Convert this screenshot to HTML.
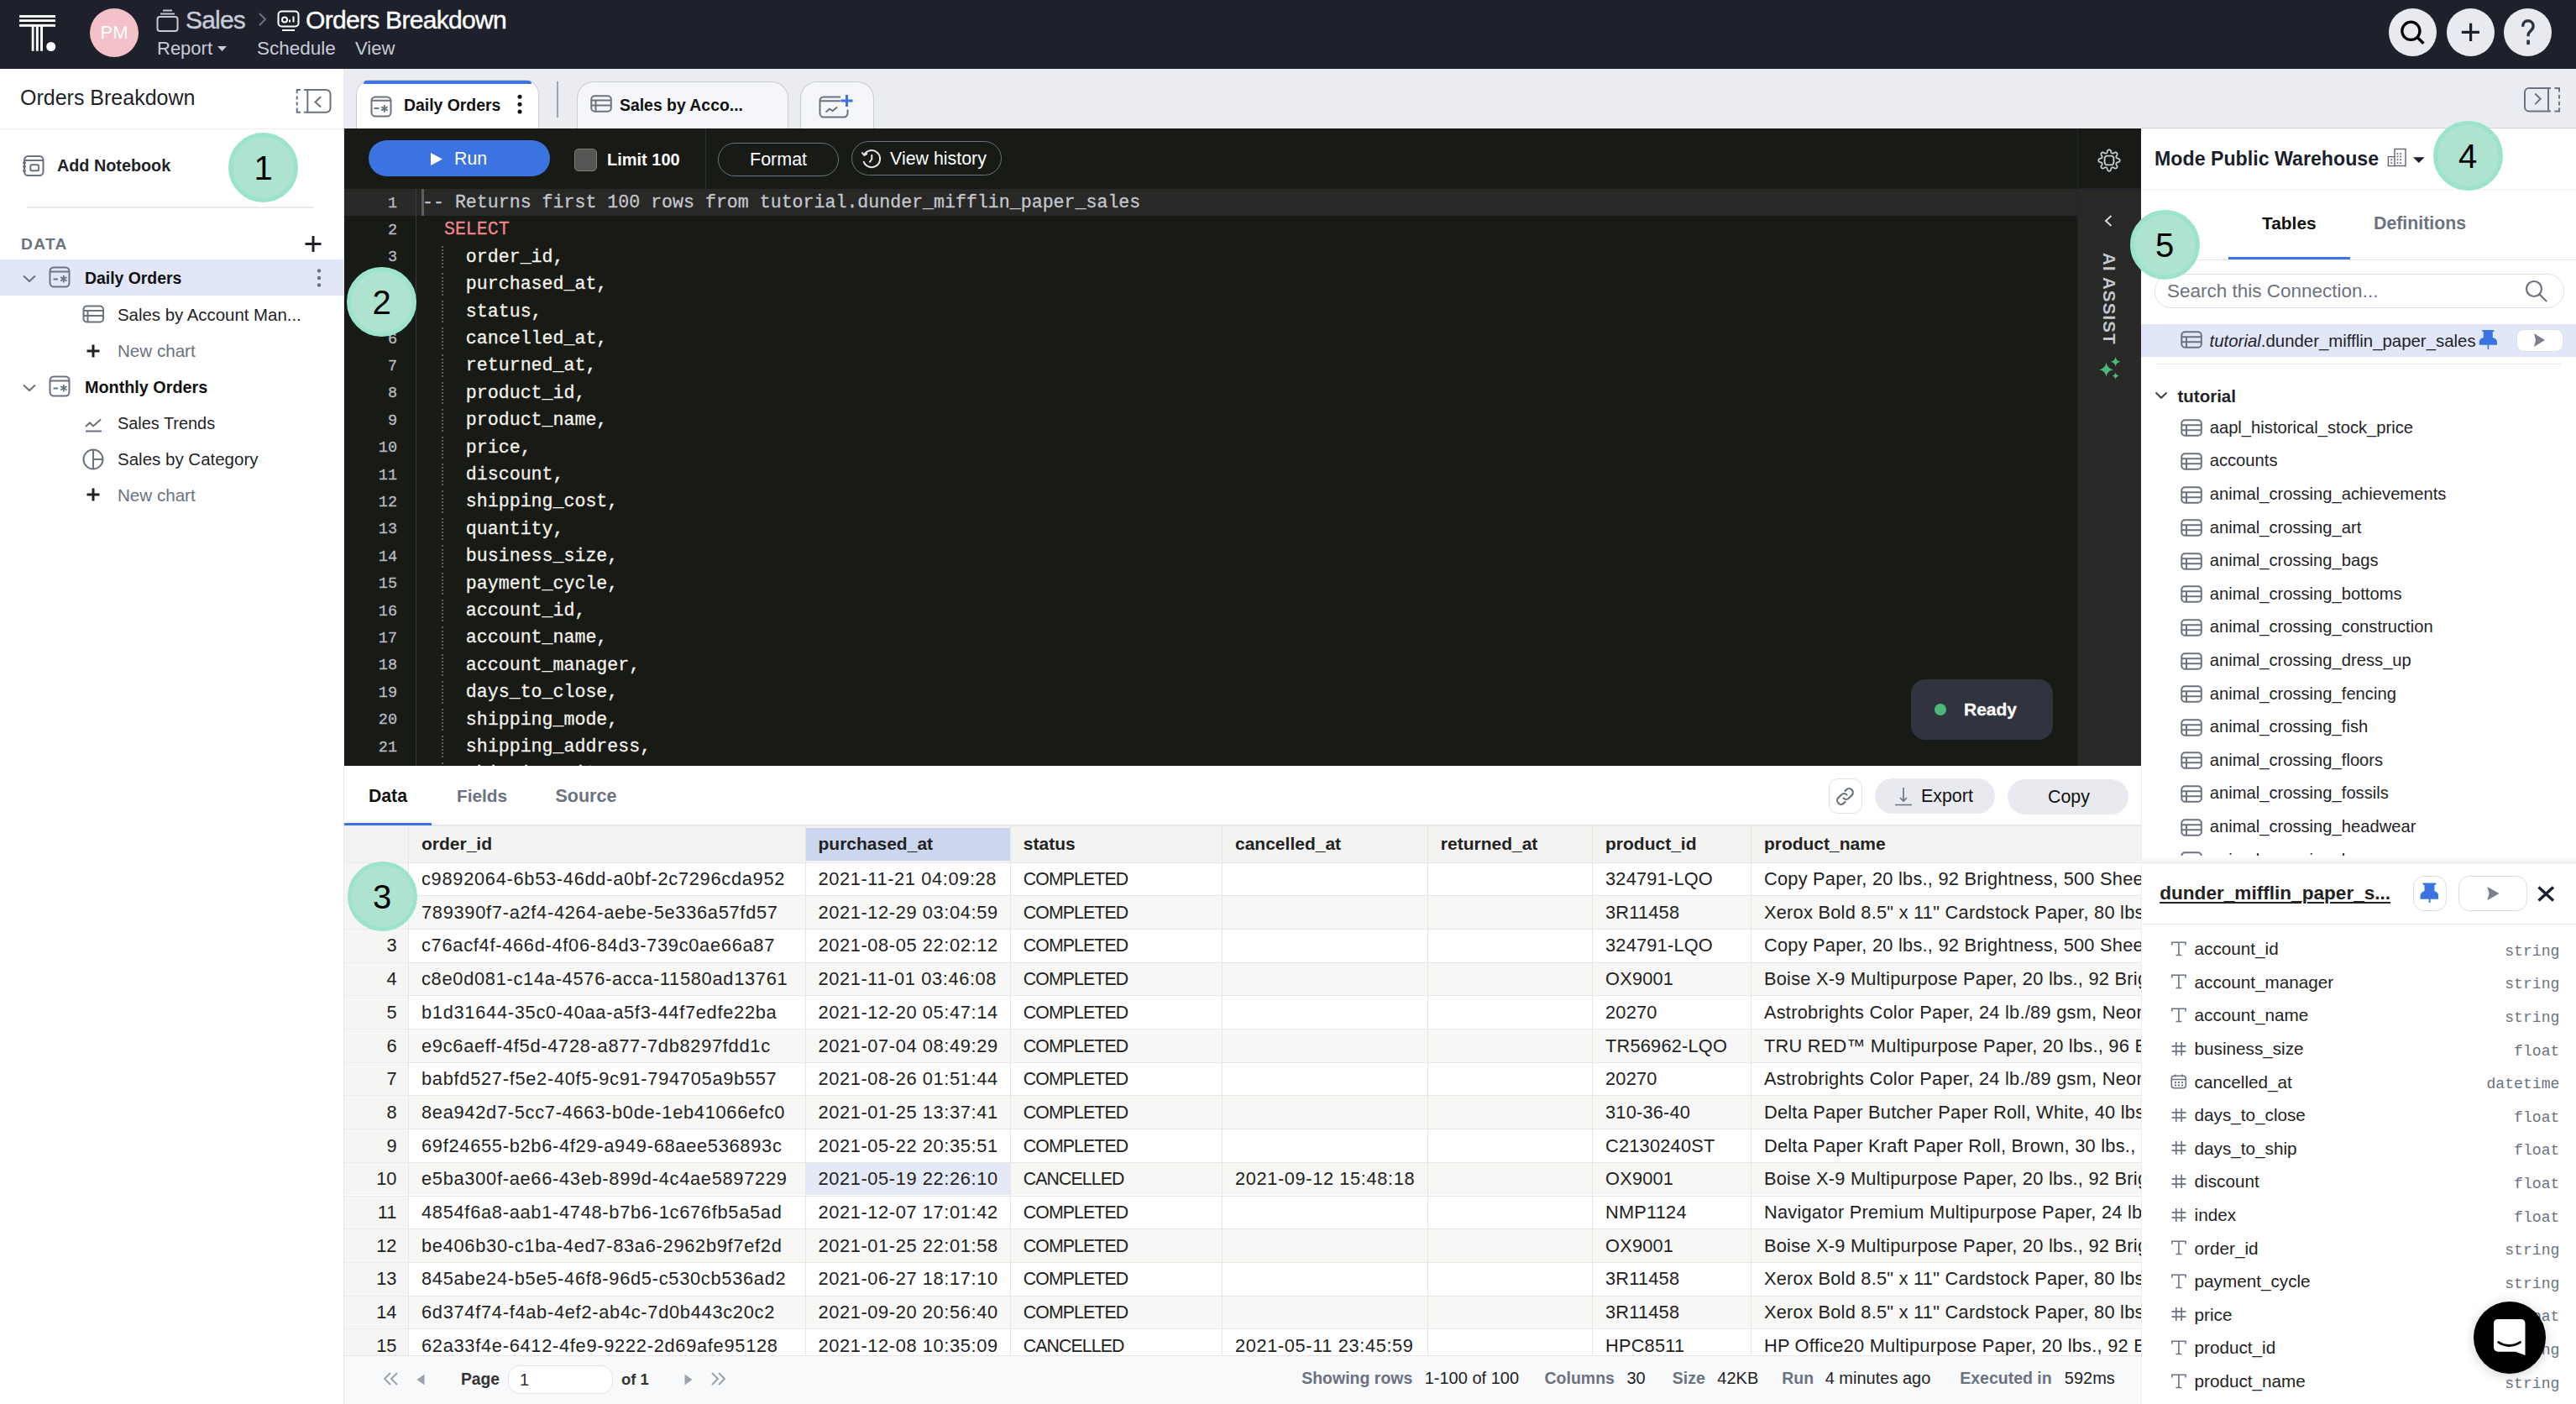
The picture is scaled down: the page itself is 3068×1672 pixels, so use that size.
<!DOCTYPE html>
<html><head><meta charset="utf-8"><style>
*{box-sizing:border-box;margin:0;padding:0}
html,body{width:3068px;height:1672px;overflow:hidden;background:#fff}
body{font-family:"Liberation Sans",sans-serif;color:#1f2328;position:relative}
.a{position:absolute}
.mono{font-family:"Liberation Mono",monospace}
.nw{white-space:nowrap}
svg{display:block;overflow:visible}
/* header */
#hdr{left:0;top:0;width:3068px;height:82px;background:#1e212b}
/* annotation circles */
.ann{position:absolute;width:83px;height:83px;border-radius:50%;background:#ade3cf;border:5.5px solid #9be3cb;color:#000;font-size:40px;text-align:center;line-height:75px}
</style></head><body>
<div id="hdr" class="a">
  <svg class="a" style="left:0;top:0" width="90" height="82">
    <g fill="#fff">
      <rect x="23" y="18" width="43" height="2.9"/>
      <rect x="23" y="23.2" width="43" height="2.8"/>
      <rect x="23" y="28.9" width="43" height="2.9"/>
      <rect x="37.7" y="31" width="2.8" height="29.8"/>
      <rect x="42.9" y="31" width="2.9" height="29.8"/>
      <rect x="48.1" y="31" width="2.9" height="29.8"/>
      <circle cx="60.7" cy="55.5" r="5.5"/>
    </g>
  </svg>
  <div class="a" style="left:107px;top:10px;width:58px;height:58px;border-radius:50%;background:#f4c1c8;color:#fff;font-size:22px;text-align:center;line-height:58px">PM</div>
  <svg class="a" style="left:186px;top:10px" width="28" height="28" viewBox="0 0 28 28">
    <g fill="none" stroke="#c4c8d2" stroke-width="2">
      <rect x="1.5" y="10" width="24" height="17" rx="3"/>
      <path d="M5 6.5h17M8 2.5h11"/>
    </g>
  </svg>
  <div class="a nw" style="left:221px;top:5px;font-size:30px;letter-spacing:-0.8px;color:#c8ccd6;line-height:37px;-webkit-text-stroke:0.4px currentColor">Sales</div>
  <svg class="a" style="left:306px;top:13px" width="14" height="20" viewBox="0 0 14 20"><path d="M3 3l7 7-7 7" fill="none" stroke="#6d7280" stroke-width="2"/></svg>
  <svg class="a" style="left:330px;top:12px" width="28" height="26" viewBox="0 0 28 26">
    <g fill="none" stroke="#fff" stroke-width="2">
      <rect x="1.5" y="1.5" width="24" height="18" rx="4"/>
      <circle cx="9" cy="11.5" r="3"/>
      <path d="M15 14.5v-3M19.5 14.5v-7M6 24h15"/>
    </g>
  </svg>
  <div class="a nw" style="left:364px;top:5px;font-size:30px;letter-spacing:-0.7px;color:#fff;line-height:37px;-webkit-text-stroke:0.4px currentColor">Orders Breakdown</div>
  <div class="a nw" style="left:187px;top:44px;font-size:22px;color:#c8ccd6;line-height:28px">Report</div>
  <svg class="a" style="left:259px;top:54px" width="12" height="8"><path d="M0 1h11l-5.5 6z" fill="#c8ccd6"/></svg>
  <div class="a nw" style="left:306px;top:44px;font-size:22.5px;color:#c8ccd6;line-height:28px">Schedule</div>
  <div class="a nw" style="left:423px;top:44px;font-size:22px;color:#c8ccd6;line-height:28px">View</div>
  <div class="a" style="left:2845px;top:10px;width:57px;height:57px;border-radius:50%;background:#e9eaef"></div>
  <svg class="a" style="left:2845px;top:10px" width="57" height="57" viewBox="2845 10 57 57"><g fill="none" stroke="#000" stroke-width="3.3"><circle cx="2871.4" cy="36.8" r="10.6"/><path d="M2879 44.5l7.5 7.3"/></g></svg>
  <div class="a" style="left:2914px;top:10px;width:57px;height:57px;border-radius:50%;background:#e9eaef"></div>
  <svg class="a" style="left:2914px;top:10px" width="57" height="57" viewBox="2914 10 57 57"><path d="M2942.6 27.7v21.3M2931.8 38.4h21.2" fill="none" stroke="#1e212b" stroke-width="3.2"/></svg>
  <div class="a" style="left:2982px;top:10px;width:57px;height:57px;border-radius:50%;background:#e9eaef"></div>
  <svg class="a" style="left:2982px;top:10px" width="57" height="57" viewBox="2982 10 57 57"><path d="M3004.6 31.8c0-4.8 2.9-7 6.2-7s6.3 2.3 6.3 6.2c0 3.4-2 4.8-3.8 6.4-1.6 1.4-2.2 2.4-2.2 4.3v1.6" fill="none" stroke="#2d3140" stroke-width="3.4"/><rect x="3009.3" y="47.6" width="3.6" height="5.5" fill="#2d3140"/></svg>
</div>
<div id="side" class="a" style="left:0;top:82px;width:410px;height:1590px;background:#fff;border-right:1px solid #e9eaee">
  <div class="a nw" style="left:24px;top:18px;font-size:25px;line-height:32px;color:#1f2328">Orders Breakdown</div>
  <svg class="a" style="left:350px;top:22px" width="46" height="32" viewBox="350 104 46 32">
    <g fill="none" stroke="#6b7280" stroke-width="2">
      <path d="M358 107h-4.3v4.3M353.7 114.5v4M353.7 121.5v4M353.7 128.5v5.2h4.3"/>
      <path d="M362 107h26.5a5 5 0 0 1 5 5v16.7a5 5 0 0 1-5 5H362"/>
      <path d="M366.3 107v26.7"/>
      <path d="M382.1 115.2l-6.6 6.2 6.6 6.2"/>
    </g>
  </svg>
  <div class="a" style="left:0;top:71px;width:409px;height:1px;background:#eceef2"></div>
  <svg class="a" style="left:26px;top:102px" width="28" height="28" viewBox="26 184 28 28">
    <g fill="none" stroke="#6b7280" stroke-width="2">
      <rect x="29" y="186" width="22.5" height="23" rx="4.5"/>
      <path d="M29.5 191h21.5"/>
      <rect x="36.3" y="196.3" width="9.8" height="7" rx="1.5"/>
      <path d="M27 193.7h4M27 198.6h4M27 203.6h4"/>
    </g>
  </svg>
  <div class="a nw" style="left:68px;top:101px;font-size:19.8px;font-weight:700;line-height:28px;color:#1f2328">Add Notebook</div>
  <div class="a" style="left:32px;top:164px;width:341px;height:2px;background:#e8eaee"></div>
  <div class="a nw" style="left:25px;top:196px;font-size:19.2px;font-weight:700;letter-spacing:1.3px;line-height:26px;color:#6b7280">DATA</div>
  <svg class="a" style="left:362px;top:198px" width="22" height="22" viewBox="0 0 22 22"><path d="M11 1v19M1.5 10.5h19" fill="none" stroke="#1f2328" stroke-width="3"/></svg>
  <div class="a" style="left:0;top:227px;width:409px;height:43px;background:#e1e6f8"></div>
  <!-- tree -->
  <svg class="a" style="left:26px;top:244px" width="18" height="12" viewBox="0 0 18 12"><path d="M2 2.5l7 6.6 7-6.6" fill="none" stroke="#6b7280" stroke-width="2"/></svg>
  <svg class="a q" style="left:58px;top:235px" width="27" height="27" viewBox="0 0 27 27">
    <g fill="none" stroke="#6b7280" stroke-width="2"><rect x="1.5" y="1.5" width="23" height="23" rx="4.5"/><path d="M2 6.5h22M5.5 15.5h5.5"/><path d="M17.8 11v8.5M14.2 13l7.2 4.5M21.4 13l-7.2 4.5" stroke-width="1.8"/></g>
  </svg>
  <div class="a nw" style="left:101px;top:235px;font-size:19.4px;font-weight:700;line-height:28px;color:#111">Daily Orders</div>
  <svg class="a" style="left:376px;top:237px" width="8" height="24" viewBox="0 0 8 24"><g fill="#6b7280"><circle cx="4" cy="3.5" r="2.2"/><circle cx="4" cy="12" r="2.2"/><circle cx="4" cy="20.5" r="2.2"/></g></svg>
  <svg class="a" style="left:98px;top:281px" width="27" height="22" viewBox="0 0 27 22">
    <g fill="none" stroke="#6b7280" stroke-width="2"><rect x="1.5" y="1.5" width="23.5" height="19" rx="4"/><path d="M2 7h22.5M2 13h22.5M6.5 7v13.5"/></g>
  </svg>
  <div class="a nw" style="left:140px;top:279px;font-size:20.4px;line-height:28px;color:#1f2328">Sales by Account Man...</div>
  <svg class="a" style="left:102px;top:327px" width="18" height="18" viewBox="0 0 18 18"><path d="M9 1.5v15M1.5 9h15" fill="none" stroke="#1f2328" stroke-width="3"/></svg>
  <div class="a nw" style="left:140px;top:322px;font-size:20.6px;line-height:28px;color:#6b7280">New chart</div>
  <svg class="a" style="left:26px;top:374px" width="18" height="12" viewBox="0 0 18 12"><path d="M2 2.5l7 6.6 7-6.6" fill="none" stroke="#6b7280" stroke-width="2"/></svg>
  <svg class="a" style="left:58px;top:365px" width="27" height="27" viewBox="0 0 27 27">
    <g fill="none" stroke="#6b7280" stroke-width="2"><rect x="1.5" y="1.5" width="23" height="23" rx="4.5"/><path d="M2 6.5h22M5.5 15.5h5.5"/><path d="M17.8 11v8.5M14.2 13l7.2 4.5M21.4 13l-7.2 4.5" stroke-width="1.8"/></g>
  </svg>
  <div class="a nw" style="left:101px;top:365px;font-size:19.8px;font-weight:700;line-height:28px;color:#111">Monthly Orders</div>
  <svg class="a" style="left:100px;top:414px" width="24" height="20" viewBox="0 0 24 20">
    <g fill="none" stroke="#6b7280" stroke-width="2"><path d="M2 12l5-4.5 4 4 9-8M2 17.5h19"/></g>
  </svg>
  <div class="a nw" style="left:140px;top:408px;font-size:19.9px;line-height:28px;color:#1f2328">Sales Trends</div>
  <svg class="a" style="left:97px;top:451px" width="28" height="28" viewBox="0 0 28 28">
    <g fill="none" stroke="#6b7280" stroke-width="2"><circle cx="14" cy="14" r="11.5"/><path d="M14 2.5v23M14 14h11.5"/></g>
  </svg>
  <div class="a nw" style="left:140px;top:451px;font-size:20.5px;line-height:28px;color:#1f2328">Sales by Category</div>
  <svg class="a" style="left:102px;top:498px" width="18" height="18" viewBox="0 0 18 18"><path d="M9 1.5v15M1.5 9h15" fill="none" stroke="#1f2328" stroke-width="3"/></svg>
  <div class="a nw" style="left:140px;top:494px;font-size:20.6px;line-height:28px;color:#6b7280">New chart</div>
</div>
<div id="tabbar" class="a" style="left:410px;top:82px;width:2658px;height:71px;background:#ebecf1">
  <div class="a" style="left:14px;top:13px;width:218px;height:58px;background:#fff;border:1px solid #c9ccd4;border-bottom:none;border-radius:17px 17px 0 0"></div>
  <div class="a" style="left:23px;top:13.5px;width:200px;height:4.5px;background:#3b73e0;border-radius:4px 4px 0 0"></div>
  <svg class="a" style="left:31px;top:32px" width="27" height="27" viewBox="0 0 27 27">
    <g fill="none" stroke="#6b7280" stroke-width="2"><rect x="1.5" y="1.5" width="23" height="23" rx="4.5"/><path d="M2 5.8h22M4.5 15h6"/><path d="M16.8 11v8.8M13 13.2l7.6 4.4M20.6 13.2l-7.6 4.4" stroke-width="1.9"/></g>
  </svg>
  <div class="a nw" style="left:71px;top:28.5px;font-size:19.4px;font-weight:700;line-height:28px;color:#111">Daily Orders</div>
  <svg class="a" style="left:204px;top:30px" width="10" height="26" viewBox="0 0 10 26"><g fill="#111"><circle cx="5" cy="3.3" r="2.5"/><circle cx="5" cy="12.2" r="2.5"/><circle cx="5" cy="21" r="2.5"/></g></svg>
  <div class="a" style="left:253px;top:15px;width:2px;height:43px;background:#9ca3af"></div>
  <div class="a" style="left:277px;top:15px;width:252px;height:56px;background:#f5f6f9;border:1px solid #c9ccd4;border-bottom:none;border-radius:20px 20px 0 0"></div>
  <svg class="a" style="left:293px;top:31px" width="27" height="22" viewBox="0 0 27 22">
    <g fill="none" stroke="#6b7280" stroke-width="2"><rect x="1.3" y="1.3" width="23.5" height="18.5" rx="4"/><path d="M2 6.5h22.5M2 12.5h22.5M6.5 6.5v13"/></g>
  </svg>
  <div class="a nw" style="left:328px;top:29px;font-size:19.4px;font-weight:700;line-height:28px;color:#111">Sales by Acco...</div>
  <div class="a" style="left:543px;top:15px;width:88px;height:56px;background:#f5f6f9;border:1px solid #c9ccd4;border-bottom:none;border-radius:20px 20px 0 0"></div>
  <svg class="a" style="left:566px;top:28px" width="44" height="32" viewBox="978 110 44 32">
    <g fill="none" stroke="#6b7280" stroke-width="2"><path d="M1003 115.5h-20a4.5 4.5 0 0 0-4.5 4.5v15a4.5 4.5 0 0 0 4.5 4.5h24a4.5 4.5 0 0 0 4.5-4.5v-4.5M979 120.2h24M985.5 133.5l4.5-3.8 3.8 2.4 5.4-4.6"/></g>
    <path d="M1010.5 113v14M1003.5 120h14" fill="none" stroke="#3b73e0" stroke-width="3"/>
  </svg>
  <svg class="a" style="left:2595px;top:20px" width="46" height="32" viewBox="3005 102 46 32">
    <g fill="none" stroke="#6b7280" stroke-width="2">
      <path d="M3038 105h-26a5 5 0 0 0-5 5v17.5a5 5 0 0 0 5 5h26"/>
      <path d="M3035 105v27.5"/>
      <path d="M3042.5 105h5.5v4.5M3048 113v4.5M3048 121v4.5M3048 128.5v4h-5.5"/>
      <path d="M3019.3 111.5l6.3 6.3-6.3 6.3"/>
    </g>
  </svg>
</div>
<div class="a" style="left:2550px;top:152px;width:518px;height:1px;background:#cfd2d9"></div>
<div id="edtb" class="a" style="left:410px;top:153px;width:2064px;height:72px;background:#181a16">
  <div class="a" style="left:29px;top:14px;width:216px;height:43px;border-radius:22px;background:#3b73e0"></div>
  <svg class="a" style="left:102px;top:28px" width="16" height="17" viewBox="0 0 16 17"><path d="M1 1l14 7.5L1 16z" fill="#fff"/></svg>
  <div class="a nw" style="left:131px;top:22px;font-size:21.3px;line-height:28px;color:#fff">Run</div>
  <div class="a" style="left:274px;top:24px;width:27px;height:27px;border-radius:5px;background:#555653;border:1.5px solid #7d7f7b"></div>
  <div class="a nw" style="left:313px;top:23px;font-size:20px;font-weight:700;line-height:28px;color:#fff">Limit 100</div>
  <div class="a" style="left:430px;top:0;width:1px;height:72px;background:#2c2f3a"></div>
  <div class="a" style="left:445px;top:17px;width:144px;height:40px;border-radius:21px;border:1.5px solid #6b7080"></div>
  <div class="a nw" style="left:483px;top:23px;font-size:21.5px;line-height:28px;color:#fff">Format</div>
  <div class="a" style="left:604px;top:15px;width:179px;height:41px;border-radius:21px;border:1.5px solid #6b7080"></div>
  <svg class="a" style="left:614px;top:22px" width="28" height="28" viewBox="0 0 28 28"><g fill="none" stroke="#e5e7eb" stroke-width="2"><path d="M5.2 9.5A10 10 0 1 1 4.5 17"/><path d="M2.5 6.5l2.8 3.5 3.8-2.4"/><path d="M14.3 9v5.5l-2.8 4"/></g></svg>
  <div class="a nw" style="left:650px;top:22px;font-size:21.4px;line-height:28px;color:#fff">View history</div>
</div>

<div id="ed" class="a mono" style="left:410px;top:225px;width:2064px;height:687px;background:#181a16;overflow:hidden;font-size:21.6px;-webkit-text-stroke:0.3px currentColor">
<div class="a" style="left:0;top:0;width:2064px;height:31.5px;background:#282927"></div>
<div class="a" style="left:85px;top:0;width:1px;height:687px;background:#343849"></div>
<div class="a" style="left:92px;top:0;width:3px;height:31.5px;background:#5b5d5a"></div>
<div class="a nw" style="left:0;top:0.0px;width:63px;text-align:right;line-height:32.4px;color:#b8bbc4;font-size:18.5px;padding-top:1.5px">1</div>
<div class="a nw" style="left:93px;top:0.0px;line-height:32.4px;color:#c4c7ce">-- Returns first 100 rows from tutorial.dunder_mifflin_paper_sales</div>
<div class="a nw" style="left:0;top:32.4px;width:63px;text-align:right;line-height:32.4px;color:#b8bbc4;font-size:18.5px;padding-top:1.5px">2</div>
<div class="a nw" style="left:93px;top:32.4px;line-height:32.4px;color:#f0848c;white-space:pre">  SELECT</div>
<div class="a nw" style="left:0;top:64.8px;width:63px;text-align:right;line-height:32.4px;color:#b8bbc4;font-size:18.5px;padding-top:1.5px">3</div>
<div class="a" style="left:116px;top:67.8px;width:0;height:26.4px;border-left:2px dotted #5d5f5b"></div>
<div class="a nw" style="left:93px;top:64.8px;line-height:32.4px;color:#f4f2ea;white-space:pre">    order_id,</div>
<div class="a nw" style="left:0;top:97.2px;width:63px;text-align:right;line-height:32.4px;color:#b8bbc4;font-size:18.5px;padding-top:1.5px">4</div>
<div class="a" style="left:116px;top:100.2px;width:0;height:26.4px;border-left:2px dotted #5d5f5b"></div>
<div class="a nw" style="left:93px;top:97.2px;line-height:32.4px;color:#f4f2ea;white-space:pre">    purchased_at,</div>
<div class="a nw" style="left:0;top:129.6px;width:63px;text-align:right;line-height:32.4px;color:#b8bbc4;font-size:18.5px;padding-top:1.5px">5</div>
<div class="a" style="left:116px;top:132.6px;width:0;height:26.4px;border-left:2px dotted #5d5f5b"></div>
<div class="a nw" style="left:93px;top:129.6px;line-height:32.4px;color:#f4f2ea;white-space:pre">    status,</div>
<div class="a nw" style="left:0;top:162.0px;width:63px;text-align:right;line-height:32.4px;color:#b8bbc4;font-size:18.5px;padding-top:1.5px">6</div>
<div class="a" style="left:116px;top:165.0px;width:0;height:26.4px;border-left:2px dotted #5d5f5b"></div>
<div class="a nw" style="left:93px;top:162.0px;line-height:32.4px;color:#f4f2ea;white-space:pre">    cancelled_at,</div>
<div class="a nw" style="left:0;top:194.4px;width:63px;text-align:right;line-height:32.4px;color:#b8bbc4;font-size:18.5px;padding-top:1.5px">7</div>
<div class="a" style="left:116px;top:197.4px;width:0;height:26.4px;border-left:2px dotted #5d5f5b"></div>
<div class="a nw" style="left:93px;top:194.4px;line-height:32.4px;color:#f4f2ea;white-space:pre">    returned_at,</div>
<div class="a nw" style="left:0;top:226.8px;width:63px;text-align:right;line-height:32.4px;color:#b8bbc4;font-size:18.5px;padding-top:1.5px">8</div>
<div class="a" style="left:116px;top:229.8px;width:0;height:26.4px;border-left:2px dotted #5d5f5b"></div>
<div class="a nw" style="left:93px;top:226.8px;line-height:32.4px;color:#f4f2ea;white-space:pre">    product_id,</div>
<div class="a nw" style="left:0;top:259.2px;width:63px;text-align:right;line-height:32.4px;color:#b8bbc4;font-size:18.5px;padding-top:1.5px">9</div>
<div class="a" style="left:116px;top:262.2px;width:0;height:26.4px;border-left:2px dotted #5d5f5b"></div>
<div class="a nw" style="left:93px;top:259.2px;line-height:32.4px;color:#f4f2ea;white-space:pre">    product_name,</div>
<div class="a nw" style="left:0;top:291.6px;width:63px;text-align:right;line-height:32.4px;color:#b8bbc4;font-size:18.5px;padding-top:1.5px">10</div>
<div class="a" style="left:116px;top:294.6px;width:0;height:26.4px;border-left:2px dotted #5d5f5b"></div>
<div class="a nw" style="left:93px;top:291.6px;line-height:32.4px;color:#f4f2ea;white-space:pre">    price,</div>
<div class="a nw" style="left:0;top:324.0px;width:63px;text-align:right;line-height:32.4px;color:#b8bbc4;font-size:18.5px;padding-top:1.5px">11</div>
<div class="a" style="left:116px;top:327.0px;width:0;height:26.4px;border-left:2px dotted #5d5f5b"></div>
<div class="a nw" style="left:93px;top:324.0px;line-height:32.4px;color:#f4f2ea;white-space:pre">    discount,</div>
<div class="a nw" style="left:0;top:356.4px;width:63px;text-align:right;line-height:32.4px;color:#b8bbc4;font-size:18.5px;padding-top:1.5px">12</div>
<div class="a" style="left:116px;top:359.4px;width:0;height:26.4px;border-left:2px dotted #5d5f5b"></div>
<div class="a nw" style="left:93px;top:356.4px;line-height:32.4px;color:#f4f2ea;white-space:pre">    shipping_cost,</div>
<div class="a nw" style="left:0;top:388.8px;width:63px;text-align:right;line-height:32.4px;color:#b8bbc4;font-size:18.5px;padding-top:1.5px">13</div>
<div class="a" style="left:116px;top:391.8px;width:0;height:26.4px;border-left:2px dotted #5d5f5b"></div>
<div class="a nw" style="left:93px;top:388.8px;line-height:32.4px;color:#f4f2ea;white-space:pre">    quantity,</div>
<div class="a nw" style="left:0;top:421.2px;width:63px;text-align:right;line-height:32.4px;color:#b8bbc4;font-size:18.5px;padding-top:1.5px">14</div>
<div class="a" style="left:116px;top:424.2px;width:0;height:26.4px;border-left:2px dotted #5d5f5b"></div>
<div class="a nw" style="left:93px;top:421.2px;line-height:32.4px;color:#f4f2ea;white-space:pre">    business_size,</div>
<div class="a nw" style="left:0;top:453.6px;width:63px;text-align:right;line-height:32.4px;color:#b8bbc4;font-size:18.5px;padding-top:1.5px">15</div>
<div class="a" style="left:116px;top:456.6px;width:0;height:26.4px;border-left:2px dotted #5d5f5b"></div>
<div class="a nw" style="left:93px;top:453.6px;line-height:32.4px;color:#f4f2ea;white-space:pre">    payment_cycle,</div>
<div class="a nw" style="left:0;top:486.0px;width:63px;text-align:right;line-height:32.4px;color:#b8bbc4;font-size:18.5px;padding-top:1.5px">16</div>
<div class="a" style="left:116px;top:489.0px;width:0;height:26.4px;border-left:2px dotted #5d5f5b"></div>
<div class="a nw" style="left:93px;top:486.0px;line-height:32.4px;color:#f4f2ea;white-space:pre">    account_id,</div>
<div class="a nw" style="left:0;top:518.4px;width:63px;text-align:right;line-height:32.4px;color:#b8bbc4;font-size:18.5px;padding-top:1.5px">17</div>
<div class="a" style="left:116px;top:521.4px;width:0;height:26.4px;border-left:2px dotted #5d5f5b"></div>
<div class="a nw" style="left:93px;top:518.4px;line-height:32.4px;color:#f4f2ea;white-space:pre">    account_name,</div>
<div class="a nw" style="left:0;top:550.8px;width:63px;text-align:right;line-height:32.4px;color:#b8bbc4;font-size:18.5px;padding-top:1.5px">18</div>
<div class="a" style="left:116px;top:553.8px;width:0;height:26.4px;border-left:2px dotted #5d5f5b"></div>
<div class="a nw" style="left:93px;top:550.8px;line-height:32.4px;color:#f4f2ea;white-space:pre">    account_manager,</div>
<div class="a nw" style="left:0;top:583.2px;width:63px;text-align:right;line-height:32.4px;color:#b8bbc4;font-size:18.5px;padding-top:1.5px">19</div>
<div class="a" style="left:116px;top:586.2px;width:0;height:26.4px;border-left:2px dotted #5d5f5b"></div>
<div class="a nw" style="left:93px;top:583.2px;line-height:32.4px;color:#f4f2ea;white-space:pre">    days_to_close,</div>
<div class="a nw" style="left:0;top:615.6px;width:63px;text-align:right;line-height:32.4px;color:#b8bbc4;font-size:18.5px;padding-top:1.5px">20</div>
<div class="a" style="left:116px;top:618.6px;width:0;height:26.4px;border-left:2px dotted #5d5f5b"></div>
<div class="a nw" style="left:93px;top:615.6px;line-height:32.4px;color:#f4f2ea;white-space:pre">    shipping_mode,</div>
<div class="a nw" style="left:0;top:648.0px;width:63px;text-align:right;line-height:32.4px;color:#b8bbc4;font-size:18.5px;padding-top:1.5px">21</div>
<div class="a" style="left:116px;top:651.0px;width:0;height:26.4px;border-left:2px dotted #5d5f5b"></div>
<div class="a nw" style="left:93px;top:648.0px;line-height:32.4px;color:#f4f2ea;white-space:pre">    shipping_address,</div>
<div class="a nw" style="left:0;top:680.4px;width:63px;text-align:right;line-height:32.4px;color:#b8bbc4;font-size:18.5px;padding-top:1.5px">22</div>
<div class="a" style="left:116px;top:683.4px;width:0;height:26.4px;border-left:2px dotted #5d5f5b"></div>
<div class="a nw" style="left:93px;top:680.4px;line-height:32.4px;color:#f4f2ea;white-space:pre">    shipping_city,</div>
<div class="a" style="left:1866px;top:584px;width:169px;height:72px;border-radius:17px;background:#30343f"></div>
<div class="a" style="left:1894px;top:613px;width:14px;height:14px;border-radius:50%;background:#4cb87a"></div>
<div class="a nw" style="left:1929px;top:606px;font-family:'Liberation Sans';font-size:21px;font-weight:700;line-height:28px;color:#fff">Ready</div>
</div>
<div id="ai" class="a" style="left:2474px;top:153px;width:76px;height:759px;background:#282927;border-left:1px solid #1f2330">
  <div class="a" style="left:0;top:0;width:75px;height:72px;background:#181a16;border-bottom:1px solid #1f2330"></div>
  <svg class="a" style="left:23.4px;top:24.4px" width="28" height="28" viewBox="0 0 28 28"><path fill="none" stroke="#c8ccd6" stroke-width="1.8" stroke-linejoin="round" d="M14.00 1.35 L14.25 1.36 L14.50 1.39 L14.74 1.45 L14.98 1.53 L15.22 1.66 L15.44 1.85 L15.65 2.10 L15.83 2.44 L15.99 2.85 L16.13 3.31 L16.24 3.77 L16.36 4.18 L16.47 4.53 L16.60 4.80 L16.73 5.00 L16.87 5.16 L17.02 5.28 L17.18 5.39 L17.34 5.47 L17.50 5.55 L17.67 5.61 L17.84 5.66 L18.03 5.70 L18.22 5.72 L18.43 5.71 L18.67 5.66 L18.95 5.55 L19.27 5.39 L19.65 5.18 L20.06 4.94 L20.48 4.71 L20.88 4.53 L21.25 4.42 L21.58 4.39 L21.86 4.42 L22.12 4.49 L22.35 4.60 L22.57 4.73 L22.76 4.89 L22.94 5.06 L23.11 5.24 L23.27 5.43 L23.40 5.65 L23.51 5.88 L23.58 6.14 L23.61 6.42 L23.58 6.75 L23.47 7.12 L23.29 7.52 L23.06 7.94 L22.82 8.35 L22.61 8.73 L22.45 9.05 L22.34 9.33 L22.29 9.57 L22.28 9.78 L22.30 9.97 L22.34 10.16 L22.39 10.33 L22.45 10.50 L22.53 10.66 L22.61 10.82 L22.72 10.98 L22.84 11.13 L23.00 11.27 L23.20 11.40 L23.47 11.53 L23.82 11.64 L24.23 11.76 L24.69 11.87 L25.15 12.01 L25.56 12.17 L25.90 12.35 L26.15 12.56 L26.34 12.78 L26.47 13.02 L26.55 13.26 L26.61 13.50 L26.64 13.75 L26.65 14.00 L26.64 14.25 L26.61 14.50 L26.55 14.74 L26.47 14.98 L26.34 15.22 L26.15 15.44 L25.90 15.65 L25.56 15.83 L25.15 15.99 L24.69 16.13 L24.23 16.24 L23.82 16.36 L23.47 16.47 L23.20 16.60 L23.00 16.73 L22.84 16.87 L22.72 17.02 L22.61 17.18 L22.53 17.34 L22.45 17.50 L22.39 17.67 L22.34 17.84 L22.30 18.03 L22.28 18.22 L22.29 18.43 L22.34 18.67 L22.45 18.95 L22.61 19.27 L22.82 19.65 L23.06 20.06 L23.29 20.48 L23.47 20.88 L23.58 21.25 L23.61 21.58 L23.58 21.86 L23.51 22.12 L23.40 22.35 L23.27 22.57 L23.11 22.76 L22.94 22.94 L22.76 23.11 L22.57 23.27 L22.35 23.40 L22.12 23.51 L21.86 23.58 L21.58 23.61 L21.25 23.58 L20.88 23.47 L20.48 23.29 L20.06 23.06 L19.65 22.82 L19.27 22.61 L18.95 22.45 L18.67 22.34 L18.43 22.29 L18.22 22.28 L18.03 22.30 L17.84 22.34 L17.67 22.39 L17.50 22.45 L17.34 22.53 L17.18 22.61 L17.02 22.72 L16.87 22.84 L16.73 23.00 L16.60 23.20 L16.47 23.47 L16.36 23.82 L16.24 24.23 L16.13 24.69 L15.99 25.15 L15.83 25.56 L15.65 25.90 L15.44 26.15 L15.22 26.34 L14.98 26.47 L14.74 26.55 L14.50 26.61 L14.25 26.64 L14.00 26.65 L13.75 26.64 L13.50 26.61 L13.26 26.55 L13.02 26.47 L12.78 26.34 L12.56 26.15 L12.35 25.90 L12.17 25.56 L12.01 25.15 L11.87 24.69 L11.76 24.23 L11.64 23.82 L11.53 23.47 L11.40 23.20 L11.27 23.00 L11.13 22.84 L10.98 22.72 L10.82 22.61 L10.66 22.53 L10.50 22.45 L10.33 22.39 L10.16 22.34 L9.97 22.30 L9.78 22.28 L9.57 22.29 L9.33 22.34 L9.05 22.45 L8.73 22.61 L8.35 22.82 L7.94 23.06 L7.52 23.29 L7.12 23.47 L6.75 23.58 L6.42 23.61 L6.14 23.58 L5.88 23.51 L5.65 23.40 L5.43 23.27 L5.24 23.11 L5.06 22.94 L4.89 22.76 L4.73 22.57 L4.60 22.35 L4.49 22.12 L4.42 21.86 L4.39 21.58 L4.42 21.25 L4.53 20.88 L4.71 20.48 L4.94 20.06 L5.18 19.65 L5.39 19.27 L5.55 18.95 L5.66 18.67 L5.71 18.43 L5.72 18.22 L5.70 18.03 L5.66 17.84 L5.61 17.67 L5.55 17.50 L5.47 17.34 L5.39 17.18 L5.28 17.02 L5.16 16.87 L5.00 16.73 L4.80 16.60 L4.53 16.47 L4.18 16.36 L3.77 16.24 L3.31 16.13 L2.85 15.99 L2.44 15.83 L2.10 15.65 L1.85 15.44 L1.66 15.22 L1.53 14.98 L1.45 14.74 L1.39 14.50 L1.36 14.25 L1.35 14.00 L1.36 13.75 L1.39 13.50 L1.45 13.26 L1.53 13.02 L1.66 12.78 L1.85 12.56 L2.10 12.35 L2.44 12.17 L2.85 12.01 L3.31 11.87 L3.77 11.76 L4.18 11.64 L4.53 11.53 L4.80 11.40 L5.00 11.27 L5.16 11.13 L5.28 10.98 L5.39 10.82 L5.47 10.66 L5.55 10.50 L5.61 10.33 L5.66 10.16 L5.70 9.97 L5.72 9.78 L5.71 9.57 L5.66 9.33 L5.55 9.05 L5.39 8.73 L5.18 8.35 L4.94 7.94 L4.71 7.52 L4.53 7.12 L4.42 6.75 L4.39 6.42 L4.42 6.14 L4.49 5.88 L4.60 5.65 L4.73 5.43 L4.89 5.24 L5.06 5.06 L5.24 4.89 L5.43 4.73 L5.65 4.60 L5.88 4.49 L6.14 4.42 L6.42 4.39 L6.75 4.42 L7.12 4.53 L7.52 4.71 L7.94 4.94 L8.35 5.18 L8.73 5.39 L9.05 5.55 L9.33 5.66 L9.57 5.71 L9.78 5.72 L9.97 5.70 L10.16 5.66 L10.33 5.61 L10.50 5.55 L10.66 5.47 L10.82 5.39 L10.98 5.28 L11.13 5.16 L11.27 5.00 L11.40 4.80 L11.53 4.53 L11.64 4.18 L11.76 3.77 L11.87 3.31 L12.01 2.85 L12.17 2.44 L12.35 2.10 L12.56 1.85 L12.78 1.66 L13.02 1.53 L13.26 1.45 L13.50 1.39 L13.75 1.36Z"/><rect x="8.6" y="8.6" width="10.8" height="10.8" rx="3.2" fill="none" stroke="#c8ccd6" stroke-width="1.9"/></svg>
  <svg class="a" style="left:30px;top:102px" width="12" height="16" viewBox="0 0 12 16"><path d="M9.5 2l-6.5 6 6.5 6" fill="none" stroke="#d8dae0" stroke-width="2"/></svg>
  <div class="a nw" style="left:26px;top:148px;writing-mode:vertical-rl;font-size:20.5px;font-weight:700;letter-spacing:1.15px;line-height:22px;color:#c4c7ce">AI ASSIST</div>
  <svg class="a" style="left:22px;top:268px" width="34" height="36" viewBox="2496 421 34 36"><g fill="#4cb87a">
    <path d="M2507.6 431.7q1.3 7.2 8.5 8.5q-7.2 1.3-8.5 8.5q-1.3-7.2-8.5-8.5q7.2-1.3 8.5-8.5z"/>
    <path d="M2518.6 425q0.9 4.9 5.8 5.8q-4.9 0.9-5.8 5.8q-0.9-4.9-5.8-5.8q4.9-0.9 5.8-5.8z"/>
    <path d="M2518.6 443.6q0.6 3.5 4.1 4.1q-3.5 0.6-4.1 4.1q-0.6-3.5-4.1-4.1q3.5-0.6 4.1-4.1z"/>
  </g></svg>
</div>
<div id="res" class="a" style="left:410px;top:912px;width:2140px;height:760px;background:#fff;overflow:hidden">
<div class="a nw" style="left:29px;top:22px;font-size:21.2px;font-weight:700;line-height:28px;color:#111">Data</div>
<div class="a nw" style="left:134px;top:22px;font-size:20.8px;font-weight:700;line-height:28px;color:#6b7280">Fields</div>
<div class="a nw" style="left:251.5px;top:22px;font-size:21.5px;font-weight:700;line-height:28px;color:#6b7280">Source</div>


<div class="a" style="left:1767.5px;top:15px;width:40px;height:42px;border-radius:11px;border:1.5px solid #dfe1e6;background:#fff"></div>
<svg class="a" style="left:1774px;top:23px" width="27" height="27" viewBox="0 0 27 27"><g fill="none" stroke="#6b7280" stroke-width="2.2" stroke-linecap="round"><path d="M11.5 15.5a4.6 4.6 0 0 0 6.5 0l3.6-3.6a4.6 4.6 0 0 0-6.5-6.5l-1.6 1.6"/><path d="M15.5 11.5a4.6 4.6 0 0 0-6.5 0l-3.6 3.6a4.6 4.6 0 0 0 6.5 6.5l1.6-1.6"/></g></svg>
<div class="a" style="left:1823px;top:15px;width:143px;height:42px;border-radius:21px;background:#e9eaef"></div>
<svg class="a" style="left:1845px;top:22px" width="24" height="28" viewBox="0 0 24 28"><g fill="none" stroke="#6b7280" stroke-width="1.7"><path d="M12 4v16M8 16l4 4 4-4M2 24.5h20"/></g></svg>
<div class="a nw" style="left:1878px;top:22px;font-size:21.4px;line-height:28px;color:#111">Export</div>
<div class="a" style="left:1981px;top:16px;width:144px;height:42px;border-radius:21px;background:#e9eaef"></div>
<div class="a nw" style="left:2029px;top:23px;font-size:21.4px;line-height:28px;color:#111">Copy</div>
<div class="a" style="left:0;top:72px;width:2140px;height:42.5px;background:#f3f3f1"></div><div class="a" style="left:0;top:70px;width:2140px;height:2px;background:#e8e9ec"></div><div class="a" style="left:0;top:67.5px;width:104px;height:3.5px;background:#3b73e0"></div>
<div class="a" style="left:550px;top:73.5px;width:242.8px;height:39px;background:#ccd7ef"></div>
<div class="a nw" style="left:92.0px;top:78.5px;font-size:21px;font-weight:700;line-height:28px;color:#222">order_id</div>
<div class="a nw" style="left:564.5px;top:78.5px;font-size:21px;font-weight:700;line-height:28px;color:#222">purchased_at</div>
<div class="a nw" style="left:808.8px;top:78.5px;font-size:21px;font-weight:700;line-height:28px;color:#222">status</div>
<div class="a nw" style="left:1061.0px;top:78.5px;font-size:21px;font-weight:700;line-height:28px;color:#222">cancelled_at</div>
<div class="a nw" style="left:1305.8px;top:78.5px;font-size:21px;font-weight:700;line-height:28px;color:#222">returned_at</div>
<div class="a nw" style="left:1502.0px;top:78.5px;font-size:21px;font-weight:700;line-height:28px;color:#222">product_id</div>
<div class="a nw" style="left:1690.9px;top:78.5px;font-size:21px;font-weight:700;line-height:28px;color:#222">product_name</div>
<div class="a" style="left:76.5px;top:114.5px;width:2063.5px;height:39.7px;background:#fff;border-top:1.5px solid #e8e8e5"></div>
<div class="a" style="left:0;top:114.5px;width:76.5px;height:39.7px;background:#f5f5f3;border-top:1px solid #ececea"></div>
<div class="a nw" style="left:0;top:121.0px;width:62.5px;text-align:right;font-size:21.8px;line-height:28px;color:#222">1</div>
<div class="a nw" style="left:92.0px;top:121.0px;font-size:21.8px;letter-spacing:0.72px;line-height:28px;color:#222">c9892064-6b53-46dd-a0bf-2c7296cda952</div>
<div class="a nw" style="left:564.5px;top:121.0px;font-size:21.8px;letter-spacing:0.62px;line-height:28px;color:#222">2021-11-21 04:09:28</div>
<div class="a nw" style="left:808.8px;top:121.0px;font-size:21.3px;letter-spacing:-0.9px;line-height:28px;color:#222">COMPLETED</div>
<div class="a nw" style="left:1502.0px;top:121.0px;font-size:21.8px;letter-spacing:0.2px;line-height:28px;color:#222">324791-LQO</div>
<div class="a nw" style="left:1690.9px;top:121.0px;font-size:21.8px;letter-spacing:0.25px;line-height:28px;color:#222">Copy Paper, 20 lbs., 92 Brightness, 500 Sheets, White</div>
<div class="a" style="left:76.5px;top:154.2px;width:2063.5px;height:39.7px;background:#f7f7f5;border-top:1.5px solid #e8e8e5"></div>
<div class="a" style="left:0;top:154.2px;width:76.5px;height:39.7px;background:#f5f5f3;border-top:1px solid #ececea"></div>
<div class="a nw" style="left:0;top:160.7px;width:62.5px;text-align:right;font-size:21.8px;line-height:28px;color:#222">2</div>
<div class="a nw" style="left:92.0px;top:160.7px;font-size:21.8px;letter-spacing:0.72px;line-height:28px;color:#222">789390f7-a2f4-4264-aebe-5e336a57fd57</div>
<div class="a nw" style="left:564.5px;top:160.7px;font-size:21.8px;letter-spacing:0.62px;line-height:28px;color:#222">2021-12-29 03:04:59</div>
<div class="a nw" style="left:808.8px;top:160.7px;font-size:21.3px;letter-spacing:-0.9px;line-height:28px;color:#222">COMPLETED</div>
<div class="a nw" style="left:1502.0px;top:160.7px;font-size:21.8px;letter-spacing:0.2px;line-height:28px;color:#222">3R11458</div>
<div class="a nw" style="left:1690.9px;top:160.7px;font-size:21.8px;letter-spacing:0.25px;line-height:28px;color:#222">Xerox Bold 8.5" x 11" Cardstock Paper, 80 lbs., White</div>
<div class="a" style="left:76.5px;top:193.9px;width:2063.5px;height:39.7px;background:#fff;border-top:1.5px solid #e8e8e5"></div>
<div class="a" style="left:0;top:193.9px;width:76.5px;height:39.7px;background:#f5f5f3;border-top:1px solid #ececea"></div>
<div class="a nw" style="left:0;top:200.4px;width:62.5px;text-align:right;font-size:21.8px;line-height:28px;color:#222">3</div>
<div class="a nw" style="left:92.0px;top:200.4px;font-size:21.8px;letter-spacing:0.72px;line-height:28px;color:#222">c76acf4f-466d-4f06-84d3-739c0ae66a87</div>
<div class="a nw" style="left:564.5px;top:200.4px;font-size:21.8px;letter-spacing:0.62px;line-height:28px;color:#222">2021-08-05 22:02:12</div>
<div class="a nw" style="left:808.8px;top:200.4px;font-size:21.3px;letter-spacing:-0.9px;line-height:28px;color:#222">COMPLETED</div>
<div class="a nw" style="left:1502.0px;top:200.4px;font-size:21.8px;letter-spacing:0.2px;line-height:28px;color:#222">324791-LQO</div>
<div class="a nw" style="left:1690.9px;top:200.4px;font-size:21.8px;letter-spacing:0.25px;line-height:28px;color:#222">Copy Paper, 20 lbs., 92 Brightness, 500 Sheets, White</div>
<div class="a" style="left:76.5px;top:233.6px;width:2063.5px;height:39.7px;background:#f7f7f5;border-top:1.5px solid #e8e8e5"></div>
<div class="a" style="left:0;top:233.6px;width:76.5px;height:39.7px;background:#f5f5f3;border-top:1px solid #ececea"></div>
<div class="a nw" style="left:0;top:240.1px;width:62.5px;text-align:right;font-size:21.8px;line-height:28px;color:#222">4</div>
<div class="a nw" style="left:92.0px;top:240.1px;font-size:21.8px;letter-spacing:0.72px;line-height:28px;color:#222">c8e0d081-c14a-4576-acca-11580ad13761</div>
<div class="a nw" style="left:564.5px;top:240.1px;font-size:21.8px;letter-spacing:0.62px;line-height:28px;color:#222">2021-11-01 03:46:08</div>
<div class="a nw" style="left:808.8px;top:240.1px;font-size:21.3px;letter-spacing:-0.9px;line-height:28px;color:#222">COMPLETED</div>
<div class="a nw" style="left:1502.0px;top:240.1px;font-size:21.8px;letter-spacing:0.2px;line-height:28px;color:#222">OX9001</div>
<div class="a nw" style="left:1690.9px;top:240.1px;font-size:21.8px;letter-spacing:0.25px;line-height:28px;color:#222">Boise X-9 Multipurpose Paper, 20 lbs., 92 Brightness</div>
<div class="a" style="left:76.5px;top:273.3px;width:2063.5px;height:39.7px;background:#fff;border-top:1.5px solid #e8e8e5"></div>
<div class="a" style="left:0;top:273.3px;width:76.5px;height:39.7px;background:#f5f5f3;border-top:1px solid #ececea"></div>
<div class="a nw" style="left:0;top:279.8px;width:62.5px;text-align:right;font-size:21.8px;line-height:28px;color:#222">5</div>
<div class="a nw" style="left:92.0px;top:279.8px;font-size:21.8px;letter-spacing:0.72px;line-height:28px;color:#222">b1d31644-35c0-40aa-a5f3-44f7edfe22ba</div>
<div class="a nw" style="left:564.5px;top:279.8px;font-size:21.8px;letter-spacing:0.62px;line-height:28px;color:#222">2021-12-20 05:47:14</div>
<div class="a nw" style="left:808.8px;top:279.8px;font-size:21.3px;letter-spacing:-0.9px;line-height:28px;color:#222">COMPLETED</div>
<div class="a nw" style="left:1502.0px;top:279.8px;font-size:21.8px;letter-spacing:0.2px;line-height:28px;color:#222">20270</div>
<div class="a nw" style="left:1690.9px;top:279.8px;font-size:21.8px;letter-spacing:0.25px;line-height:28px;color:#222">Astrobrights Color Paper, 24 lb./89 gsm, Neon</div>
<div class="a" style="left:76.5px;top:313.0px;width:2063.5px;height:39.7px;background:#f7f7f5;border-top:1.5px solid #e8e8e5"></div>
<div class="a" style="left:0;top:313.0px;width:76.5px;height:39.7px;background:#f5f5f3;border-top:1px solid #ececea"></div>
<div class="a nw" style="left:0;top:319.5px;width:62.5px;text-align:right;font-size:21.8px;line-height:28px;color:#222">6</div>
<div class="a nw" style="left:92.0px;top:319.5px;font-size:21.8px;letter-spacing:0.72px;line-height:28px;color:#222">e9c6aeff-4f5d-4728-a877-7db8297fdd1c</div>
<div class="a nw" style="left:564.5px;top:319.5px;font-size:21.8px;letter-spacing:0.62px;line-height:28px;color:#222">2021-07-04 08:49:29</div>
<div class="a nw" style="left:808.8px;top:319.5px;font-size:21.3px;letter-spacing:-0.9px;line-height:28px;color:#222">COMPLETED</div>
<div class="a nw" style="left:1502.0px;top:319.5px;font-size:21.8px;letter-spacing:0.2px;line-height:28px;color:#222">TR56962-LQO</div>
<div class="a nw" style="left:1690.9px;top:319.5px;font-size:21.8px;letter-spacing:0.25px;line-height:28px;color:#222">TRU RED™ Multipurpose Paper, 20 lbs., 96 Bright</div>
<div class="a" style="left:76.5px;top:352.7px;width:2063.5px;height:39.7px;background:#fff;border-top:1.5px solid #e8e8e5"></div>
<div class="a" style="left:0;top:352.7px;width:76.5px;height:39.7px;background:#f5f5f3;border-top:1px solid #ececea"></div>
<div class="a nw" style="left:0;top:359.2px;width:62.5px;text-align:right;font-size:21.8px;line-height:28px;color:#222">7</div>
<div class="a nw" style="left:92.0px;top:359.2px;font-size:21.8px;letter-spacing:0.72px;line-height:28px;color:#222">babfd527-f5e2-40f5-9c91-794705a9b557</div>
<div class="a nw" style="left:564.5px;top:359.2px;font-size:21.8px;letter-spacing:0.62px;line-height:28px;color:#222">2021-08-26 01:51:44</div>
<div class="a nw" style="left:808.8px;top:359.2px;font-size:21.3px;letter-spacing:-0.9px;line-height:28px;color:#222">COMPLETED</div>
<div class="a nw" style="left:1502.0px;top:359.2px;font-size:21.8px;letter-spacing:0.2px;line-height:28px;color:#222">20270</div>
<div class="a nw" style="left:1690.9px;top:359.2px;font-size:21.8px;letter-spacing:0.25px;line-height:28px;color:#222">Astrobrights Color Paper, 24 lb./89 gsm, Neon</div>
<div class="a" style="left:76.5px;top:392.4px;width:2063.5px;height:39.7px;background:#f7f7f5;border-top:1.5px solid #e8e8e5"></div>
<div class="a" style="left:0;top:392.4px;width:76.5px;height:39.7px;background:#f5f5f3;border-top:1px solid #ececea"></div>
<div class="a nw" style="left:0;top:398.9px;width:62.5px;text-align:right;font-size:21.8px;line-height:28px;color:#222">8</div>
<div class="a nw" style="left:92.0px;top:398.9px;font-size:21.8px;letter-spacing:0.72px;line-height:28px;color:#222">8ea942d7-5cc7-4663-b0de-1eb41066efc0</div>
<div class="a nw" style="left:564.5px;top:398.9px;font-size:21.8px;letter-spacing:0.62px;line-height:28px;color:#222">2021-01-25 13:37:41</div>
<div class="a nw" style="left:808.8px;top:398.9px;font-size:21.3px;letter-spacing:-0.9px;line-height:28px;color:#222">COMPLETED</div>
<div class="a nw" style="left:1502.0px;top:398.9px;font-size:21.8px;letter-spacing:0.2px;line-height:28px;color:#222">310-36-40</div>
<div class="a nw" style="left:1690.9px;top:398.9px;font-size:21.8px;letter-spacing:0.25px;line-height:28px;color:#222">Delta Paper Butcher Paper Roll, White, 40 lbs.</div>
<div class="a" style="left:76.5px;top:432.1px;width:2063.5px;height:39.7px;background:#fff;border-top:1.5px solid #e8e8e5"></div>
<div class="a" style="left:0;top:432.1px;width:76.5px;height:39.7px;background:#f5f5f3;border-top:1px solid #ececea"></div>
<div class="a nw" style="left:0;top:438.6px;width:62.5px;text-align:right;font-size:21.8px;line-height:28px;color:#222">9</div>
<div class="a nw" style="left:92.0px;top:438.6px;font-size:21.8px;letter-spacing:0.72px;line-height:28px;color:#222">69f24655-b2b6-4f29-a949-68aee536893c</div>
<div class="a nw" style="left:564.5px;top:438.6px;font-size:21.8px;letter-spacing:0.62px;line-height:28px;color:#222">2021-05-22 20:35:51</div>
<div class="a nw" style="left:808.8px;top:438.6px;font-size:21.3px;letter-spacing:-0.9px;line-height:28px;color:#222">COMPLETED</div>
<div class="a nw" style="left:1502.0px;top:438.6px;font-size:21.8px;letter-spacing:0.2px;line-height:28px;color:#222">C2130240ST</div>
<div class="a nw" style="left:1690.9px;top:438.6px;font-size:21.8px;letter-spacing:0.25px;line-height:28px;color:#222">Delta Paper Kraft Paper Roll, Brown, 30 lbs., 24</div>
<div class="a" style="left:76.5px;top:471.8px;width:2063.5px;height:39.7px;background:#f7f7f5;border-top:1.5px solid #e8e8e5"></div>
<div class="a" style="left:0;top:471.8px;width:76.5px;height:39.7px;background:#f5f5f3;border-top:1px solid #ececea"></div>
<div class="a" style="left:549.5px;top:473.3px;width:243.3px;height:38.2px;background:#e3e9f5"></div>
<div class="a nw" style="left:0;top:478.3px;width:62.5px;text-align:right;font-size:21.8px;line-height:28px;color:#222">10</div>
<div class="a nw" style="left:92.0px;top:478.3px;font-size:21.8px;letter-spacing:0.72px;line-height:28px;color:#222">e5ba300f-ae66-43eb-899d-4c4ae5897229</div>
<div class="a nw" style="left:564.5px;top:478.3px;font-size:21.8px;letter-spacing:0.62px;line-height:28px;color:#222">2021-05-19 22:26:10</div>
<div class="a nw" style="left:808.8px;top:478.3px;font-size:21.3px;letter-spacing:-0.9px;line-height:28px;color:#222">CANCELLED</div>
<div class="a nw" style="left:1061.0px;top:478.3px;font-size:21.8px;letter-spacing:0.62px;line-height:28px;color:#222">2021-09-12 15:48:18</div>
<div class="a nw" style="left:1502.0px;top:478.3px;font-size:21.8px;letter-spacing:0.2px;line-height:28px;color:#222">OX9001</div>
<div class="a nw" style="left:1690.9px;top:478.3px;font-size:21.8px;letter-spacing:0.25px;line-height:28px;color:#222">Boise X-9 Multipurpose Paper, 20 lbs., 92 Brightness</div>
<div class="a" style="left:76.5px;top:511.5px;width:2063.5px;height:39.7px;background:#fff;border-top:1.5px solid #e8e8e5"></div>
<div class="a" style="left:0;top:511.5px;width:76.5px;height:39.7px;background:#f5f5f3;border-top:1px solid #ececea"></div>
<div class="a nw" style="left:0;top:518.0px;width:62.5px;text-align:right;font-size:21.8px;line-height:28px;color:#222">11</div>
<div class="a nw" style="left:92.0px;top:518.0px;font-size:21.8px;letter-spacing:0.72px;line-height:28px;color:#222">4854f6a8-aab1-4748-b7b6-1c676fb5a5ad</div>
<div class="a nw" style="left:564.5px;top:518.0px;font-size:21.8px;letter-spacing:0.62px;line-height:28px;color:#222">2021-12-07 17:01:42</div>
<div class="a nw" style="left:808.8px;top:518.0px;font-size:21.3px;letter-spacing:-0.9px;line-height:28px;color:#222">COMPLETED</div>
<div class="a nw" style="left:1502.0px;top:518.0px;font-size:21.8px;letter-spacing:0.2px;line-height:28px;color:#222">NMP1124</div>
<div class="a nw" style="left:1690.9px;top:518.0px;font-size:21.8px;letter-spacing:0.25px;line-height:28px;color:#222">Navigator Premium Multipurpose Paper, 24 lb</div>
<div class="a" style="left:76.5px;top:551.2px;width:2063.5px;height:39.7px;background:#f7f7f5;border-top:1.5px solid #e8e8e5"></div>
<div class="a" style="left:0;top:551.2px;width:76.5px;height:39.7px;background:#f5f5f3;border-top:1px solid #ececea"></div>
<div class="a nw" style="left:0;top:557.7px;width:62.5px;text-align:right;font-size:21.8px;line-height:28px;color:#222">12</div>
<div class="a nw" style="left:92.0px;top:557.7px;font-size:21.8px;letter-spacing:0.72px;line-height:28px;color:#222">be406b30-c1ba-4ed7-83a6-2962b9f7ef2d</div>
<div class="a nw" style="left:564.5px;top:557.7px;font-size:21.8px;letter-spacing:0.62px;line-height:28px;color:#222">2021-01-25 22:01:58</div>
<div class="a nw" style="left:808.8px;top:557.7px;font-size:21.3px;letter-spacing:-0.9px;line-height:28px;color:#222">COMPLETED</div>
<div class="a nw" style="left:1502.0px;top:557.7px;font-size:21.8px;letter-spacing:0.2px;line-height:28px;color:#222">OX9001</div>
<div class="a nw" style="left:1690.9px;top:557.7px;font-size:21.8px;letter-spacing:0.25px;line-height:28px;color:#222">Boise X-9 Multipurpose Paper, 20 lbs., 92 Brightness</div>
<div class="a" style="left:76.5px;top:590.9px;width:2063.5px;height:39.7px;background:#fff;border-top:1.5px solid #e8e8e5"></div>
<div class="a" style="left:0;top:590.9px;width:76.5px;height:39.7px;background:#f5f5f3;border-top:1px solid #ececea"></div>
<div class="a nw" style="left:0;top:597.4px;width:62.5px;text-align:right;font-size:21.8px;line-height:28px;color:#222">13</div>
<div class="a nw" style="left:92.0px;top:597.4px;font-size:21.8px;letter-spacing:0.72px;line-height:28px;color:#222">845abe24-b5e5-46f8-96d5-c530cb536ad2</div>
<div class="a nw" style="left:564.5px;top:597.4px;font-size:21.8px;letter-spacing:0.62px;line-height:28px;color:#222">2021-06-27 18:17:10</div>
<div class="a nw" style="left:808.8px;top:597.4px;font-size:21.3px;letter-spacing:-0.9px;line-height:28px;color:#222">COMPLETED</div>
<div class="a nw" style="left:1502.0px;top:597.4px;font-size:21.8px;letter-spacing:0.2px;line-height:28px;color:#222">3R11458</div>
<div class="a nw" style="left:1690.9px;top:597.4px;font-size:21.8px;letter-spacing:0.25px;line-height:28px;color:#222">Xerox Bold 8.5" x 11" Cardstock Paper, 80 lbs., White</div>
<div class="a" style="left:76.5px;top:630.6px;width:2063.5px;height:39.7px;background:#f7f7f5;border-top:1.5px solid #e8e8e5"></div>
<div class="a" style="left:0;top:630.6px;width:76.5px;height:39.7px;background:#f5f5f3;border-top:1px solid #ececea"></div>
<div class="a nw" style="left:0;top:637.1px;width:62.5px;text-align:right;font-size:21.8px;line-height:28px;color:#222">14</div>
<div class="a nw" style="left:92.0px;top:637.1px;font-size:21.8px;letter-spacing:0.72px;line-height:28px;color:#222">6d374f74-f4ab-4ef2-ab4c-7d0b443c20c2</div>
<div class="a nw" style="left:564.5px;top:637.1px;font-size:21.8px;letter-spacing:0.62px;line-height:28px;color:#222">2021-09-20 20:56:40</div>
<div class="a nw" style="left:808.8px;top:637.1px;font-size:21.3px;letter-spacing:-0.9px;line-height:28px;color:#222">COMPLETED</div>
<div class="a nw" style="left:1502.0px;top:637.1px;font-size:21.8px;letter-spacing:0.2px;line-height:28px;color:#222">3R11458</div>
<div class="a nw" style="left:1690.9px;top:637.1px;font-size:21.8px;letter-spacing:0.25px;line-height:28px;color:#222">Xerox Bold 8.5" x 11" Cardstock Paper, 80 lbs., White</div>
<div class="a" style="left:76.5px;top:670.3px;width:2063.5px;height:39.7px;background:#fff;border-top:1.5px solid #e8e8e5"></div>
<div class="a" style="left:0;top:670.3px;width:76.5px;height:39.7px;background:#f5f5f3;border-top:1px solid #ececea"></div>
<div class="a nw" style="left:0;top:676.8px;width:62.5px;text-align:right;font-size:21.8px;line-height:28px;color:#222">15</div>
<div class="a nw" style="left:92.0px;top:676.8px;font-size:21.8px;letter-spacing:0.72px;line-height:28px;color:#222">62a33f4e-6412-4fe9-9222-2d69afe95128</div>
<div class="a nw" style="left:564.5px;top:676.8px;font-size:21.8px;letter-spacing:0.62px;line-height:28px;color:#222">2021-12-08 10:35:09</div>
<div class="a nw" style="left:808.8px;top:676.8px;font-size:21.3px;letter-spacing:-0.9px;line-height:28px;color:#222">CANCELLED</div>
<div class="a nw" style="left:1061.0px;top:676.8px;font-size:21.8px;letter-spacing:0.62px;line-height:28px;color:#222">2021-05-11 23:45:59</div>
<div class="a nw" style="left:1502.0px;top:676.8px;font-size:21.8px;letter-spacing:0.2px;line-height:28px;color:#222">HPC8511</div>
<div class="a nw" style="left:1690.9px;top:676.8px;font-size:21.8px;letter-spacing:0.25px;line-height:28px;color:#222">HP Office20 Multipurpose Paper, 20 lbs., 92 Bright</div>
<div class="a" style="left:76.0px;top:71px;width:1px;height:631px;background:#e6e6e3"></div>
<div class="a" style="left:548.5px;top:71px;width:1px;height:631px;background:#e6e6e3"></div>
<div class="a" style="left:792.8px;top:71px;width:1px;height:631px;background:#e6e6e3"></div>
<div class="a" style="left:1045.0px;top:71px;width:1px;height:631px;background:#e6e6e3"></div>
<div class="a" style="left:1289.8px;top:71px;width:1px;height:631px;background:#e6e6e3"></div>
<div class="a" style="left:1486.0px;top:71px;width:1px;height:631px;background:#e6e6e3"></div>
<div class="a" style="left:1674.9px;top:71px;width:1px;height:631px;background:#e6e6e3"></div>
<div class="a" style="left:0;top:702px;width:2140px;height:58px;background:#f8f9fb;border-top:1.5px solid #e6e6e6"></div>
<svg class="a" style="left:45px;top:720px" width="22" height="20" viewBox="0 0 22 20"><g fill="none" stroke="#9ca3af" stroke-width="2"><path d="M10 3l-7 7 7 7M18 3l-7 7 7 7"/></g></svg>
<svg class="a" style="left:85px;top:723px" width="12" height="16" viewBox="0 0 12 16"><path d="M10.5 1.5v13l-9-6.5z" fill="#9ca3af"/></svg>
<div class="a nw" style="left:139px;top:717px;font-size:19.3px;font-weight:700;line-height:28px;color:#333">Page</div>
<div class="a" style="left:194.5px;top:713.7px;width:125px;height:34.5px;border-radius:14px;border:1.5px solid #e3e5e9;background:#fff"></div>
<div class="a nw" style="left:209px;top:717px;font-size:20px;line-height:28px;color:#333">1</div>
<div class="a nw" style="left:330px;top:717px;font-size:18.5px;font-weight:700;line-height:28px;color:#333">of 1</div>
<svg class="a" style="left:404px;top:723px" width="12" height="16" viewBox="0 0 12 16"><path d="M1.5 1.5v13l9-6.5z" fill="#9ca3af"/></svg>
<svg class="a" style="left:434px;top:720px" width="22" height="20" viewBox="0 0 22 20"><g fill="none" stroke="#9ca3af" stroke-width="2"><path d="M4 3l7 7-7 7M12 3l7 7-7 7"/></g></svg>
<div class="a nw" style="left:1140.2px;top:715px;font-size:19.5px;font-weight:700;line-height:28px;color:#6b7280">Showing rows</div>
<div class="a nw" style="left:1286.7px;top:715px;font-size:20px;line-height:28px;color:#222">1-100 of 100</div>
<div class="a nw" style="left:1429.5px;top:715px;font-size:19.5px;font-weight:700;line-height:28px;color:#6b7280">Columns</div>
<div class="a nw" style="left:1527.4px;top:715px;font-size:20px;line-height:28px;color:#222">30</div>
<div class="a nw" style="left:1581.8px;top:715px;font-size:19.5px;font-weight:700;line-height:28px;color:#6b7280">Size</div>
<div class="a nw" style="left:1635.3px;top:715px;font-size:20px;line-height:28px;color:#222">42KB</div>
<div class="a nw" style="left:1712.2px;top:715px;font-size:19.5px;font-weight:700;line-height:28px;color:#6b7280">Run</div>
<div class="a nw" style="left:1763.7px;top:715px;font-size:20px;line-height:28px;color:#222">4 minutes ago</div>
<div class="a nw" style="left:1924.2px;top:715px;font-size:19.5px;font-weight:700;line-height:28px;color:#6b7280">Executed in</div>
<div class="a nw" style="left:2048.8px;top:715px;font-size:20px;line-height:28px;color:#222">592ms</div>
</div><div id="rp" class="a" style="left:2550px;top:153px;width:518px;height:1519px;background:#fff;overflow:hidden">
<div class="a" style="left:0;top:759px;width:1px;height:760px;background:#eceef1;z-index:5"></div>
<div class="a nw" style="left:16.0px;top:21.8px;font-size:23.2px;font-weight:700;line-height:28px;color:#1a1f2b">Mode Public Warehouse</div>
<svg class="a" style="left:292.0px;top:22.0px" width="26" height="25" viewBox="2842 175 26 25"><g fill="none" stroke="#5f6470" stroke-width="1.4"><rect x="2852" y="177.5" width="13" height="20"/><path d="M2852 186.6h-7.6v11h7.6"/></g><g fill="#5f6470"><circle cx="2855.5" cy="183" r="1"/><circle cx="2859.1" cy="183" r="1"/><circle cx="2855.5" cy="186.6" r="1"/><circle cx="2859.1" cy="186.6" r="1"/><circle cx="2855.5" cy="190.3" r="1"/><circle cx="2859.1" cy="190.3" r="1"/><circle cx="2855.5" cy="194" r="1"/><circle cx="2859.1" cy="194" r="1"/><circle cx="2848.2" cy="190.3" r="1"/><circle cx="2848.2" cy="194" r="1"/></g></svg>
<svg class="a" style="left:323.0px;top:33.0px" width="16" height="9" viewBox="2873 186 16 9"><path d="M2874 187.3h13.7l-6.85 6.6z" fill="#1a1f2b"/></svg>
<div class="a" style="left:0;top:71.5px;width:518px;height:1.5px;background:#eef0f3"></div>
<div class="a nw" style="left:144.0px;top:99.3px;font-size:20.9px;font-weight:700;line-height:28px;color:#111">Tables</div>
<div class="a nw" style="left:277.0px;top:99.3px;font-size:21.3px;font-weight:700;line-height:28px;color:#6b7280">Definitions</div>
<div class="a" style="left:0;top:155.5px;width:518px;height:1.5px;background:#e3e5ea"></div>
<div class="a" style="left:104.0px;top:152.5px;width:145px;height:3.5px;background:#3b73e0"></div>
<div class="a" style="left:15.5px;top:172.5px;width:488px;height:41.5px;border-radius:20px;border:1.5px solid #dfe1e6"></div>
<div class="a nw" style="left:31.0px;top:180.0px;font-size:22.5px;line-height:28px;color:#6b7280">Search this Connection...</div>
<svg class="a" style="left:456.0px;top:179.0px" width="30" height="28" viewBox="0 0 30 28"><g fill="none" stroke="#6b7280" stroke-width="2.2"><circle cx="12" cy="12" r="9"/><path d="M18.5 18.5l8 8" stroke-linecap="round"/></g></svg>
<div class="a" style="left:0;top:233.3px;width:518px;height:38.4px;background:#e1e6f8"></div>
<svg class="a" style="left:46.5px;top:240.5px" width="27" height="22" viewBox="0 0 27 22"><g fill="none" stroke="#6b7280" stroke-width="2"><rect x="1.3" y="1.3" width="23.5" height="18.5" rx="4"/><path d="M2 7.3h22.5M2 13.3h22.5M7 7.3v13"/></g></svg>
<div class="a nw" style="left:81.6px;top:238.5px;font-size:20.4px;line-height:28px;color:#1f2328"><i>tutorial</i>.dunder_mifflin_paper_sales</div>
<svg class="a" style="left:400.0px;top:237.0px" width="28" height="28" viewBox="2950 390 28 28"><g fill="#3b73e0"><rect x="2956" y="393" width="14.6" height="2" rx="1"/><rect x="2957.8" y="394" width="11" height="9"/><path d="M2958.5 401.9h9.5a5.8 5.8 0 0 1 6 5.8v3.1h-21.3v-3.1a5.8 5.8 0 0 1 5.8-5.8z"/><rect x="2962.6" y="410" width="1.6" height="6"/></g></svg>
<div class="a" style="left:446.6px;top:238.7px;width:56.5px;height:27.6px;border-radius:9px;background:#fff;border:1px solid #dde0e5"></div>
<svg class="a" style="left:467.0px;top:243.0px" width="16" height="18" viewBox="3017 396 16 18"><path d="M3018 397.1l13 8-13 8 2-8z" fill="#7a808c"/></svg>
<div class="a" style="left:18.7px;top:279.7px;width:481px;height:1.5px;background:#e6e8ec"></div>
<svg class="a" style="left:15.0px;top:312.0px" width="18" height="12" viewBox="0 0 18 12"><path d="M2.5 2.5l6.5 6.3 6.5-6.3" fill="none" stroke="#374151" stroke-width="2"/></svg>
<div class="a nw" style="left:43.5px;top:304.5px;font-size:20.5px;font-weight:700;line-height:28px;color:#1f2328">tutorial</div>
<svg class="a" style="left:46.5px;top:346.3px" width="27" height="22" viewBox="0 0 27 22"><g fill="none" stroke="#6b7280" stroke-width="2"><rect x="1.3" y="1.3" width="23.5" height="18.5" rx="4"/><path d="M2 7.3h22.5M2 13.3h22.5M7 7.3v13"/></g></svg>
<div class="a nw" style="left:81.7px;top:341.8px;font-size:20.2px;line-height:28px;color:#1f2328">aapl_historical_stock_price</div>
<svg class="a" style="left:46.5px;top:385.9px" width="27" height="22" viewBox="0 0 27 22"><g fill="none" stroke="#6b7280" stroke-width="2"><rect x="1.3" y="1.3" width="23.5" height="18.5" rx="4"/><path d="M2 7.3h22.5M2 13.3h22.5M7 7.3v13"/></g></svg>
<div class="a nw" style="left:81.7px;top:381.4px;font-size:20.2px;line-height:28px;color:#1f2328">accounts</div>
<svg class="a" style="left:46.5px;top:425.5px" width="27" height="22" viewBox="0 0 27 22"><g fill="none" stroke="#6b7280" stroke-width="2"><rect x="1.3" y="1.3" width="23.5" height="18.5" rx="4"/><path d="M2 7.3h22.5M2 13.3h22.5M7 7.3v13"/></g></svg>
<div class="a nw" style="left:81.7px;top:421.0px;font-size:20.2px;line-height:28px;color:#1f2328">animal_crossing_achievements</div>
<svg class="a" style="left:46.5px;top:465.1px" width="27" height="22" viewBox="0 0 27 22"><g fill="none" stroke="#6b7280" stroke-width="2"><rect x="1.3" y="1.3" width="23.5" height="18.5" rx="4"/><path d="M2 7.3h22.5M2 13.3h22.5M7 7.3v13"/></g></svg>
<div class="a nw" style="left:81.7px;top:460.6px;font-size:20.2px;line-height:28px;color:#1f2328">animal_crossing_art</div>
<svg class="a" style="left:46.5px;top:504.7px" width="27" height="22" viewBox="0 0 27 22"><g fill="none" stroke="#6b7280" stroke-width="2"><rect x="1.3" y="1.3" width="23.5" height="18.5" rx="4"/><path d="M2 7.3h22.5M2 13.3h22.5M7 7.3v13"/></g></svg>
<div class="a nw" style="left:81.7px;top:500.2px;font-size:20.2px;line-height:28px;color:#1f2328">animal_crossing_bags</div>
<svg class="a" style="left:46.5px;top:544.3px" width="27" height="22" viewBox="0 0 27 22"><g fill="none" stroke="#6b7280" stroke-width="2"><rect x="1.3" y="1.3" width="23.5" height="18.5" rx="4"/><path d="M2 7.3h22.5M2 13.3h22.5M7 7.3v13"/></g></svg>
<div class="a nw" style="left:81.7px;top:539.8px;font-size:20.2px;line-height:28px;color:#1f2328">animal_crossing_bottoms</div>
<svg class="a" style="left:46.5px;top:583.9px" width="27" height="22" viewBox="0 0 27 22"><g fill="none" stroke="#6b7280" stroke-width="2"><rect x="1.3" y="1.3" width="23.5" height="18.5" rx="4"/><path d="M2 7.3h22.5M2 13.3h22.5M7 7.3v13"/></g></svg>
<div class="a nw" style="left:81.7px;top:579.4px;font-size:20.2px;line-height:28px;color:#1f2328">animal_crossing_construction</div>
<svg class="a" style="left:46.5px;top:623.5px" width="27" height="22" viewBox="0 0 27 22"><g fill="none" stroke="#6b7280" stroke-width="2"><rect x="1.3" y="1.3" width="23.5" height="18.5" rx="4"/><path d="M2 7.3h22.5M2 13.3h22.5M7 7.3v13"/></g></svg>
<div class="a nw" style="left:81.7px;top:619.0px;font-size:20.2px;line-height:28px;color:#1f2328">animal_crossing_dress_up</div>
<svg class="a" style="left:46.5px;top:663.1px" width="27" height="22" viewBox="0 0 27 22"><g fill="none" stroke="#6b7280" stroke-width="2"><rect x="1.3" y="1.3" width="23.5" height="18.5" rx="4"/><path d="M2 7.3h22.5M2 13.3h22.5M7 7.3v13"/></g></svg>
<div class="a nw" style="left:81.7px;top:658.6px;font-size:20.2px;line-height:28px;color:#1f2328">animal_crossing_fencing</div>
<svg class="a" style="left:46.5px;top:702.7px" width="27" height="22" viewBox="0 0 27 22"><g fill="none" stroke="#6b7280" stroke-width="2"><rect x="1.3" y="1.3" width="23.5" height="18.5" rx="4"/><path d="M2 7.3h22.5M2 13.3h22.5M7 7.3v13"/></g></svg>
<div class="a nw" style="left:81.7px;top:698.2px;font-size:20.2px;line-height:28px;color:#1f2328">animal_crossing_fish</div>
<svg class="a" style="left:46.5px;top:742.3px" width="27" height="22" viewBox="0 0 27 22"><g fill="none" stroke="#6b7280" stroke-width="2"><rect x="1.3" y="1.3" width="23.5" height="18.5" rx="4"/><path d="M2 7.3h22.5M2 13.3h22.5M7 7.3v13"/></g></svg>
<div class="a nw" style="left:81.7px;top:737.8px;font-size:20.2px;line-height:28px;color:#1f2328">animal_crossing_floors</div>
<svg class="a" style="left:46.5px;top:781.9px" width="27" height="22" viewBox="0 0 27 22"><g fill="none" stroke="#6b7280" stroke-width="2"><rect x="1.3" y="1.3" width="23.5" height="18.5" rx="4"/><path d="M2 7.3h22.5M2 13.3h22.5M7 7.3v13"/></g></svg>
<div class="a nw" style="left:81.7px;top:777.4px;font-size:20.2px;line-height:28px;color:#1f2328">animal_crossing_fossils</div>
<svg class="a" style="left:46.5px;top:821.5px" width="27" height="22" viewBox="0 0 27 22"><g fill="none" stroke="#6b7280" stroke-width="2"><rect x="1.3" y="1.3" width="23.5" height="18.5" rx="4"/><path d="M2 7.3h22.5M2 13.3h22.5M7 7.3v13"/></g></svg>
<div class="a nw" style="left:81.7px;top:817.0px;font-size:20.2px;line-height:28px;color:#1f2328">animal_crossing_headwear</div>
<svg class="a" style="left:46.5px;top:861.1px" width="27" height="22" viewBox="0 0 27 22"><g fill="none" stroke="#6b7280" stroke-width="2"><rect x="1.3" y="1.3" width="23.5" height="18.5" rx="4"/><path d="M2 7.3h22.5M2 13.3h22.5M7 7.3v13"/></g></svg>
<div class="a nw" style="left:81.7px;top:856.6px;font-size:20.2px;line-height:28px;color:#1f2328">animal_crossing_housewares</div>
<div class="a" style="left:0;top:866.0px;width:518px;height:10px;background:#fff"></div><div class="a" style="left:0;top:866.0px;width:518px;height:10px;background:linear-gradient(to bottom,rgba(0,0,0,0),rgba(0,0,0,0.06))"></div>
<div class="a" style="left:0;top:876.0px;width:518px;height:643px;background:#fff">
</div>
<div class="a nw" style="left:22.2px;top:896.5px;font-size:22.6px;font-weight:700;line-height:28px;color:#222;text-decoration:underline;text-decoration-thickness:1.5px;text-underline-offset:3px">dunder_mifflin_paper_s...</div>
<div class="a" style="left:323.5px;top:890.3px;width:40.5px;height:42px;border-radius:13px;border:1px solid #d8dbe2"></div>
<svg class="a" style="left:330.0px;top:897.0px" width="28" height="28" viewBox="2880 1050 28 28"><g fill="#3b73e0"><rect x="2885.5" y="1051.6" width="16" height="2.2" rx="1"/><rect x="2887.5" y="1052.5" width="12" height="9.5"/><path d="M2888.3 1061h10.5a6.3 6.3 0 0 1 5.3 6.3v3.5h-21.6v-3.5a6.3 6.3 0 0 1 5.8-6.3z"/><rect x="2892.8" y="1070" width="1.8" height="5"/></g></svg>
<div class="a" style="left:378.2px;top:890.3px;width:81.4px;height:42px;border-radius:13px;border:1px solid #d8dbe2"></div>
<svg class="a" style="left:411.0px;top:902.0px" width="18" height="19" viewBox="2961 1055 18 19"><path d="M2962.3 1055.9l14.2 8.2-14.2 8.2 2.3-8.2z" fill="#7a808c"/></svg>
<svg class="a" style="left:470.0px;top:900.0px" width="25" height="23" viewBox="3020 1053 25 23"><path d="M3023.5 1056.5l17.5 16M3041 1056.5l-17.5 16" fill="none" stroke="#1a1f2b" stroke-width="3.4"/></svg>
<div class="a" style="left:0;top:947.0px;width:518px;height:1px;background:#e5e7eb"></div>
<svg class="a" style="left:35.0px;top:967.7px" width="20" height="18" viewBox="0 0 20 18"><g fill="none" stroke="#6b7280" stroke-width="1.6"><path d="M1.8 4.5V1.3h16.2v3.2M9.9 1.3v15.2M6.5 16.5h6.8"/></g></svg>
<div class="a nw" style="left:63.6px;top:963.2px;font-size:20.7px;line-height:28px;color:#222">account_id</div>
<div class="a nw mono" style="left:150.0px;width:348.4px;text-align:right;top:965.7px;font-size:18.1px;line-height:28px;color:#6b7280">string</div>
<svg class="a" style="left:35.0px;top:1007.3px" width="20" height="18" viewBox="0 0 20 18"><g fill="none" stroke="#6b7280" stroke-width="1.6"><path d="M1.8 4.5V1.3h16.2v3.2M9.9 1.3v15.2M6.5 16.5h6.8"/></g></svg>
<div class="a nw" style="left:63.6px;top:1002.8px;font-size:20.7px;line-height:28px;color:#222">account_manager</div>
<div class="a nw mono" style="left:150.0px;width:348.4px;text-align:right;top:1005.3px;font-size:18.1px;line-height:28px;color:#6b7280">string</div>
<svg class="a" style="left:35.0px;top:1046.9px" width="20" height="18" viewBox="0 0 20 18"><g fill="none" stroke="#6b7280" stroke-width="1.6"><path d="M1.8 4.5V1.3h16.2v3.2M9.9 1.3v15.2M6.5 16.5h6.8"/></g></svg>
<div class="a nw" style="left:63.6px;top:1042.4px;font-size:20.7px;line-height:28px;color:#222">account_name</div>
<div class="a nw mono" style="left:150.0px;width:348.4px;text-align:right;top:1044.9px;font-size:18.1px;line-height:28px;color:#6b7280">string</div>
<svg class="a" style="left:35.0px;top:1086.5px" width="20" height="18" viewBox="0 0 20 18"><g fill="none" stroke="#6b7280" stroke-width="1.7"><path d="M6.8 1v16M13.2 1v16M1.5 5.8h17M1.5 12.2h17"/></g></svg>
<div class="a nw" style="left:63.6px;top:1082.0px;font-size:20.7px;line-height:28px;color:#222">business_size</div>
<div class="a nw mono" style="left:150.0px;width:348.4px;text-align:right;top:1084.5px;font-size:18.1px;line-height:28px;color:#6b7280">float</div>
<svg class="a" style="left:35.0px;top:1126.1px" width="20" height="18" viewBox="0 0 20 18"><g fill="none" stroke="#6b7280" stroke-width="1.6"><rect x="1.3" y="2.3" width="17" height="14.5" rx="3"/><path d="M1.5 6.5h16.5M5.5 0.5v3M14 0.5v3"/></g><g fill="#6b7280"><rect x="5" y="9" width="2" height="2"/><rect x="9" y="9" width="2" height="2"/><rect x="13" y="9" width="2" height="2"/><rect x="5" y="12.5" width="2" height="2"/><rect x="9" y="12.5" width="2" height="2"/><rect x="13" y="12.5" width="2" height="2"/></g></svg>
<div class="a nw" style="left:63.6px;top:1121.6px;font-size:20.7px;line-height:28px;color:#222">cancelled_at</div>
<div class="a nw mono" style="left:150.0px;width:348.4px;text-align:right;top:1124.1px;font-size:18.1px;line-height:28px;color:#6b7280">datetime</div>
<svg class="a" style="left:35.0px;top:1165.7px" width="20" height="18" viewBox="0 0 20 18"><g fill="none" stroke="#6b7280" stroke-width="1.7"><path d="M6.8 1v16M13.2 1v16M1.5 5.8h17M1.5 12.2h17"/></g></svg>
<div class="a nw" style="left:63.6px;top:1161.2px;font-size:20.7px;line-height:28px;color:#222">days_to_close</div>
<div class="a nw mono" style="left:150.0px;width:348.4px;text-align:right;top:1163.7px;font-size:18.1px;line-height:28px;color:#6b7280">float</div>
<svg class="a" style="left:35.0px;top:1205.3px" width="20" height="18" viewBox="0 0 20 18"><g fill="none" stroke="#6b7280" stroke-width="1.7"><path d="M6.8 1v16M13.2 1v16M1.5 5.8h17M1.5 12.2h17"/></g></svg>
<div class="a nw" style="left:63.6px;top:1200.8px;font-size:20.7px;line-height:28px;color:#222">days_to_ship</div>
<div class="a nw mono" style="left:150.0px;width:348.4px;text-align:right;top:1203.3px;font-size:18.1px;line-height:28px;color:#6b7280">float</div>
<svg class="a" style="left:35.0px;top:1244.9px" width="20" height="18" viewBox="0 0 20 18"><g fill="none" stroke="#6b7280" stroke-width="1.7"><path d="M6.8 1v16M13.2 1v16M1.5 5.8h17M1.5 12.2h17"/></g></svg>
<div class="a nw" style="left:63.6px;top:1240.4px;font-size:20.7px;line-height:28px;color:#222">discount</div>
<div class="a nw mono" style="left:150.0px;width:348.4px;text-align:right;top:1242.9px;font-size:18.1px;line-height:28px;color:#6b7280">float</div>
<svg class="a" style="left:35.0px;top:1284.5px" width="20" height="18" viewBox="0 0 20 18"><g fill="none" stroke="#6b7280" stroke-width="1.7"><path d="M6.8 1v16M13.2 1v16M1.5 5.8h17M1.5 12.2h17"/></g></svg>
<div class="a nw" style="left:63.6px;top:1280.0px;font-size:20.7px;line-height:28px;color:#222">index</div>
<div class="a nw mono" style="left:150.0px;width:348.4px;text-align:right;top:1282.5px;font-size:18.1px;line-height:28px;color:#6b7280">float</div>
<svg class="a" style="left:35.0px;top:1324.1px" width="20" height="18" viewBox="0 0 20 18"><g fill="none" stroke="#6b7280" stroke-width="1.6"><path d="M1.8 4.5V1.3h16.2v3.2M9.9 1.3v15.2M6.5 16.5h6.8"/></g></svg>
<div class="a nw" style="left:63.6px;top:1319.6px;font-size:20.7px;line-height:28px;color:#222">order_id</div>
<div class="a nw mono" style="left:150.0px;width:348.4px;text-align:right;top:1322.1px;font-size:18.1px;line-height:28px;color:#6b7280">string</div>
<svg class="a" style="left:35.0px;top:1363.7px" width="20" height="18" viewBox="0 0 20 18"><g fill="none" stroke="#6b7280" stroke-width="1.6"><path d="M1.8 4.5V1.3h16.2v3.2M9.9 1.3v15.2M6.5 16.5h6.8"/></g></svg>
<div class="a nw" style="left:63.6px;top:1359.2px;font-size:20.7px;line-height:28px;color:#222">payment_cycle</div>
<div class="a nw mono" style="left:150.0px;width:348.4px;text-align:right;top:1361.7px;font-size:18.1px;line-height:28px;color:#6b7280">string</div>
<svg class="a" style="left:35.0px;top:1403.3px" width="20" height="18" viewBox="0 0 20 18"><g fill="none" stroke="#6b7280" stroke-width="1.7"><path d="M6.8 1v16M13.2 1v16M1.5 5.8h17M1.5 12.2h17"/></g></svg>
<div class="a nw" style="left:63.6px;top:1398.8px;font-size:20.7px;line-height:28px;color:#222">price</div>
<div class="a nw mono" style="left:150.0px;width:348.4px;text-align:right;top:1401.3px;font-size:18.1px;line-height:28px;color:#6b7280">float</div>
<svg class="a" style="left:35.0px;top:1442.9px" width="20" height="18" viewBox="0 0 20 18"><g fill="none" stroke="#6b7280" stroke-width="1.6"><path d="M1.8 4.5V1.3h16.2v3.2M9.9 1.3v15.2M6.5 16.5h6.8"/></g></svg>
<div class="a nw" style="left:63.6px;top:1438.4px;font-size:20.7px;line-height:28px;color:#222">product_id</div>
<div class="a nw mono" style="left:150.0px;width:348.4px;text-align:right;top:1440.9px;font-size:18.1px;line-height:28px;color:#6b7280">string</div>
<svg class="a" style="left:35.0px;top:1482.5px" width="20" height="18" viewBox="0 0 20 18"><g fill="none" stroke="#6b7280" stroke-width="1.6"><path d="M1.8 4.5V1.3h16.2v3.2M9.9 1.3v15.2M6.5 16.5h6.8"/></g></svg>
<div class="a nw" style="left:63.6px;top:1478.0px;font-size:20.7px;line-height:28px;color:#222">product_name</div>
<div class="a nw mono" style="left:150.0px;width:348.4px;text-align:right;top:1480.5px;font-size:18.1px;line-height:28px;color:#6b7280">string</div>
</div>
<div class="a" style="left:2945.5px;top:1549.6px;width:86px;height:86px;border-radius:50%;background:#000;box-shadow:0 2px 14px rgba(0,0,0,0.18)"></div>
<svg class="a" style="left:2965px;top:1567px" width="48" height="50" viewBox="0 0 48 50"><path d="M10 3.9h27.5a5 5 0 0 1 5 5V47l-11.5-4.3H10a5 5 0 0 1-5-5V8.9a5 5 0 0 1 5-5z" fill="#fff"/><path d="M10.6 31.4q13 8.2 26 0" fill="none" stroke="#000" stroke-width="2.8" stroke-linecap="round"/></svg>
<div class="ann" style="left:272.2px;top:157.8px">1</div>
<div class="ann" style="left:413.2px;top:317.7px">2</div>
<div class="ann" style="left:413.5px;top:1025.5px">3</div>
<div class="ann" style="left:2897.5px;top:143.5px">4</div>
<div class="ann" style="left:2536.5px;top:249.6px">5</div></body></html>
